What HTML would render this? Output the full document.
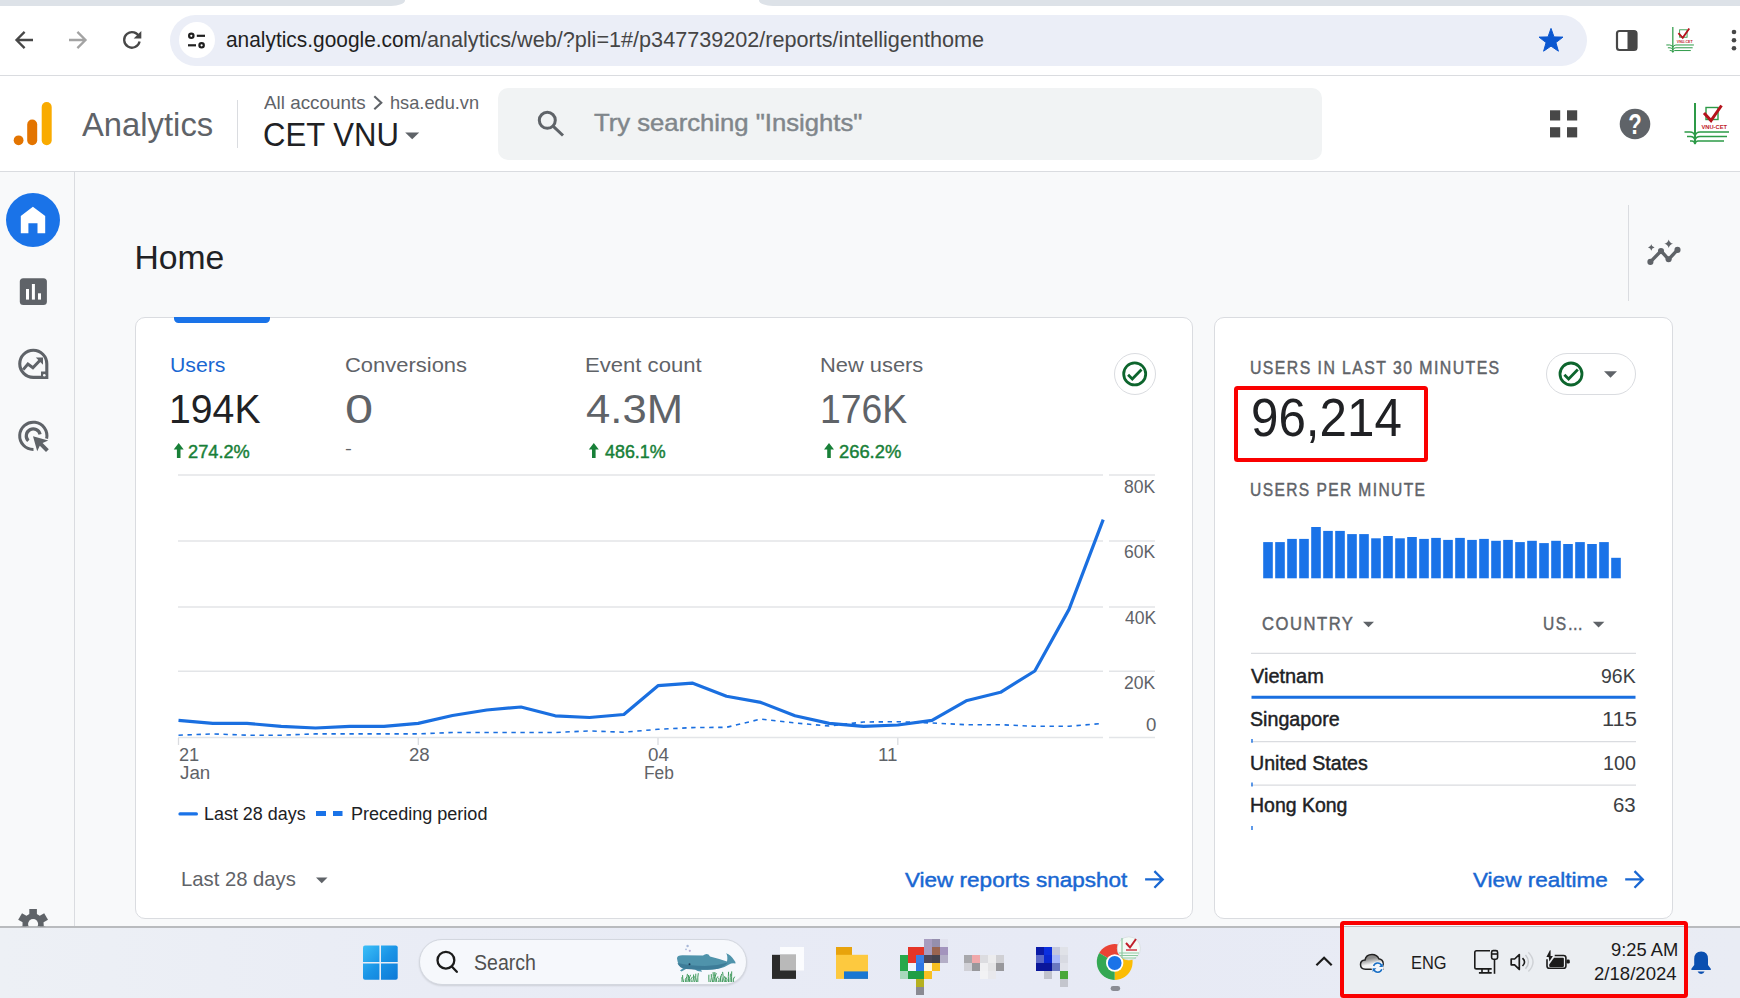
<!DOCTYPE html>
<html lang="en">
<head>
<meta charset="utf-8">
<title>Analytics | Home</title>
<style>
*{box-sizing:border-box;margin:0;padding:0}
html,body{width:1740px;height:998px;overflow:hidden;background:#f8f9fa;font-family:"Liberation Sans",sans-serif}
.abs{position:absolute}
.t{position:absolute;white-space:pre;line-height:1;transform-origin:0 50%}
#tabstrip{left:0;top:0;width:405px;height:5.8px;background:#dde2e8;border-bottom-right-radius:14px 5.8px}
#tabactive{left:759px;top:0;width:981px;height:5.8px;background:#dde2e8;border-bottom-left-radius:14px 5.8px}
#toolbar{left:0;top:0;width:1740px;height:75.5px;background:#fff;border-bottom:1px solid #dadce0}
#omni{left:170px;top:15px;width:1417px;height:51px;border-radius:26px;background:#ebeef7}
#omnicirc{left:178.5px;top:22px;width:36px;height:36px;border-radius:50%;background:#fff}
#gahead{left:0;top:76px;width:1740px;height:96px;background:#fff;border-bottom:1px solid #dadce0}
#gasearch{left:498px;top:88px;width:824px;height:72px;border-radius:10px;background:#f1f3f4}
#hdiv{left:237px;top:100px;width:1px;height:48px;background:#dadce0}
#nav{left:0;top:172px;width:75px;height:755px;background:#f8f9fa;border-right:1px solid #dadce0}
#homebtn{left:5.9px;top:192.9px;width:54px;height:54px;border-radius:50%;background:#1a73e8}
#vline{left:1628px;top:205px;width:1px;height:96px;background:#dadce0}
.card{background:#fff;border:1px solid #dadce0;border-radius:10px}
#card1{left:134.5px;top:316.5px;width:1058px;height:602px}
#card2{left:1214px;top:316.5px;width:459px;height:602px}
#tabind{left:174px;top:316.7px;width:96px;height:6px;background:#1a73e8;border-radius:0 0 4.5px 4.5px}
#chk1{left:1114px;top:353px;width:42px;height:42px;border-radius:50%;border:1px solid #dadce0;background:#fff}
#pill{left:1546px;top:353px;width:90px;height:42px;border-radius:21px;border:1px solid #dadce0;background:#fff}
#taskbar{left:0;top:926px;width:1740px;height:72px;background:linear-gradient(90deg,#edf0f5 0,#e9ecf5 25%,#e7eaf5 60%,#e9ecf4 100%);border-top:2px solid #b9bbbe}
#tsearch{left:419px;top:938.5px;width:328px;height:46.5px;border-radius:24px;background:#f6f8fc;border:1px solid #d3d7df;box-shadow:0 1px 2px rgba(0,0,0,.12)}
svg{position:absolute;left:0;top:0}
</style>
</head>
<body>
<div class="abs" id="toolbar"></div>
<div class="abs" id="tabstrip"></div>
<div class="abs" id="tabactive"></div>
<div class="abs" id="omni"></div>
<div class="abs" id="omnicirc"></div>
<div class="abs" id="gahead"></div>
<div class="abs" id="gasearch"></div>
<div class="abs" id="hdiv"></div>
<div class="abs" id="nav"></div>
<div class="abs" id="homebtn"></div>
<div class="abs" id="vline"></div>
<div class="abs card" id="card1"></div>
<div class="abs card" id="card2"></div>
<div class="abs" id="tabind"></div>
<div class="abs" id="chk1"></div>
<div class="abs" id="pill"></div>
<div class="abs" id="taskbar"></div>
<div class="abs" id="tsearch"></div>
<svg id="gfx" width="1740" height="998" viewBox="0 0 1740 998">
<g fill="none" stroke="#474747" stroke-width="2.3">
<path d="M33 40 H17.5 M24.6 31.9 L16.5 40 L24.6 48.1"/>
<path d="M69 40 H84.5 M77.4 31.9 L85.5 40 L77.4 48.1" stroke="#a3a3a3"/>
<path d="M139.3 37.2 A7.8 7.8 0 1 0 139.6 41.5"/>
</g>
<path d="M141.3 31 V38.6 H133.7 Z" fill="#474747"/>
<g fill="none" stroke="#1f1f1f" stroke-width="2.2"><circle cx="191.3" cy="35.8" r="2.2"/><path d="M196.8 35.8 H205"/><circle cx="201.6" cy="45.3" r="2.2"/><path d="M188 45.3 H196"/></g>
<polygon points="1551.0,28.4 1554.0,36.9 1563.0,37.1 1555.9,42.6 1558.4,51.2 1551.0,46.1 1543.6,51.2 1546.1,42.6 1539.0,37.1 1548.0,36.9" fill="#0b57d0" stroke="#0b57d0" stroke-width="1" stroke-linejoin="round"/>
<rect x="1617" y="31" width="19.5" height="19" rx="2.5" fill="none" stroke="#474747" stroke-width="2.2"/><rect x="1627.5" y="31" width="9" height="19" fill="#474747"/>
<g fill="#474747"><circle cx="1734" cy="32" r="2.3"/><circle cx="1734" cy="40.2" r="2.3"/><circle cx="1734" cy="48.3" r="2.3"/></g>
<g transform="translate(1684,103)"><g fill="none" stroke="#2d9a47" stroke-width="1.6">
<path d="M11 0 V40.5" stroke-width="2"/>
<path d="M0.5 29 H6 Q10 29 11 33 Q12 29 16 29 H45"/>
<path d="M3 33.5 H6.5 Q10 33.5 11 37 Q12 33.5 16 33.5 H43"/>
<path d="M6 38 H8 Q10.3 38 11 41 Q11.7 38 14 38 H40"/>
<rect x="22" y="4.5" width="12" height="12" stroke-width="1.4"/>
<path d="M20 10 L27 17.5 L37.5 2.5" stroke="#b5121b" stroke-width="3"/>
</g><text x="17.5" y="26" font-family="Liberation Sans, sans-serif" font-size="6" font-weight="700" fill="#c0202a" textLength="25.5" lengthAdjust="spacingAndGlyphs">VNU-CET</text></g>
<g transform="translate(1666,27) scale(0.62)"><g fill="none" stroke="#2d9a47" stroke-width="1.6">
<path d="M11 0 V40.5" stroke-width="2"/>
<path d="M0.5 29 H6 Q10 29 11 33 Q12 29 16 29 H45"/>
<path d="M3 33.5 H6.5 Q10 33.5 11 37 Q12 33.5 16 33.5 H43"/>
<path d="M6 38 H8 Q10.3 38 11 41 Q11.7 38 14 38 H40"/>
<rect x="22" y="4.5" width="12" height="12" stroke-width="1.4"/>
<path d="M20 10 L27 17.5 L37.5 2.5" stroke="#b5121b" stroke-width="3"/>
</g><text x="17.5" y="26" font-family="Liberation Sans, sans-serif" font-size="6" font-weight="700" fill="#c0202a" textLength="25.5" lengthAdjust="spacingAndGlyphs">VNU-CET</text></g>
<circle cx="18.6" cy="140.3" r="4.9" fill="#e37400"/><rect x="27.2" y="119.5" width="10" height="25.7" rx="5" fill="#e37400"/><rect x="41.7" y="102" width="10" height="43.2" rx="5" fill="#f9ab00"/>
<path d="M374.3 96.3 L381.3 102.8 L374.3 109.3" fill="none" stroke="#5f6368" stroke-width="2.1"/>
<path d="M405.2 132.4 H419.2 L412.2 139.2 Z" fill="#5f6368"/>
<g fill="none" stroke="#5f6368" stroke-width="3"><circle cx="547.3" cy="120.3" r="8"/><path d="M553.3 126.3 L563 135.5"/></g>
<g fill="#474747"><rect x="1550" y="110.3" width="10.2" height="10.2"/><rect x="1567" y="110.3" width="10.2" height="10.2"/><rect x="1550" y="127.2" width="10.2" height="10.2"/><rect x="1567" y="127.2" width="10.2" height="10.2"/></g>
<circle cx="1635" cy="124" r="15.3" fill="#5f6368"/><text x="1635" y="134.2" text-anchor="middle" font-family="Liberation Sans, sans-serif" font-size="29" font-weight="700" fill="#fff" textLength="13.5" lengthAdjust="spacingAndGlyphs">?</text>
<path d="M32.9 206.7 L45.2 216 V233.2 H37.5 V223.2 H28.4 V233.2 H20.8 V216 Z" fill="#fff"/>
<rect x="19.8" y="278.3" width="27.1" height="26.8" rx="3.5" fill="#5f6368"/><g fill="#fff"><rect x="26" y="289" width="3" height="10.6"/><rect x="31.9" y="284" width="3" height="15.6"/><rect x="38" y="293.3" width="3" height="6.3"/></g>
<g fill="none" stroke="#5f6368" stroke-width="3.1"><path d="M33.3 350.3 A13.5 13.5 0 1 0 33.3 377.4 H46.8 V363.8 A13.5 13.5 0 0 0 33.3 350.3 Z"/><path d="M23.2 369.6 L27.9 364 L32.9 367.8 L40.3 360" stroke-width="3"/></g><path d="M35.8 357.5 H43 V364.8 Z" fill="#5f6368"/><path d="M41 371.5 H47.5 V378 H41 Z" fill="#5f6368"/><circle cx="44.3" cy="375.2" r="1.3" fill="#f8f9fa"/>
<g fill="none" stroke="#5f6368" stroke-width="3"><path d="M33.5 449.4 A13.6 13.6 0 1 1 46.6 438.6"/><path d="M28.3 440.8 A7 7 0 1 1 40.1 434.3" stroke-width="3.2"/></g><path d="M33 436.3 L48.2 440.5 L42.6 443 L48.8 449.3 L46 452 L39.8 445.8 L37.2 451.3 Z" fill="#5f6368"/>
<defs><clipPath id="gc"><rect x="0" y="900" width="75" height="26.3"/></clipPath></defs><g clip-path="url(#gc)"><g transform="translate(33.1,924)" fill="#5f6368"><circle r="10.6"/><rect x="-3.8" y="-15" width="7.6" height="8" transform="rotate(0)"/><rect x="-3.8" y="-15" width="7.6" height="8" transform="rotate(60)"/><rect x="-3.8" y="-15" width="7.6" height="8" transform="rotate(120)"/><rect x="-3.8" y="-15" width="7.6" height="8" transform="rotate(180)"/><rect x="-3.8" y="-15" width="7.6" height="8" transform="rotate(240)"/><rect x="-3.8" y="-15" width="7.6" height="8" transform="rotate(300)"/><circle r="5.05" fill="#f8f9fa"/></g></g>
<g stroke="#5f6368" stroke-width="3.4" fill="none" stroke-linejoin="round"><path d="M1650.4 261.9 L1661 251 L1668.6 259.3 L1677.5 249.9"/></g><g fill="#5f6368"><circle cx="1650.4" cy="261.9" r="3.05"/><circle cx="1661" cy="251" r="3.05"/><circle cx="1668.6" cy="259.3" r="3.05"/><circle cx="1677.5" cy="249.9" r="3.05"/><path d="M1668.7 239.5 Q1669.5 243 1673 243.8 Q1669.5 244.6 1668.7 248 Q1667.9 244.6 1664.4 243.8 Q1667.9 243 1668.7 239.5Z"/><path d="M1651.3 244.2 Q1651.8 247 1654.6 247.5 Q1651.8 248 1651.3 250.8 Q1650.8 248 1648 247.5 Q1650.8 247 1651.3 244.2Z"/></g>
<path d="M178.7 443 L183.7 449.6 H180.5 V458 H176.9 V449.6 H173.7 Z" fill="#188038"/>
<path d="M593.8 443 L598.8 449.6 H595.6 V458 H592.0 V449.6 H588.8 Z" fill="#188038"/>
<path d="M829.0 443 L834.0 449.6 H830.8 V458 H827.2 V449.6 H824.0 Z" fill="#188038"/>
<g fill="none" stroke="#0d652d" stroke-width="2.8"><circle cx="1134.7" cy="373.9" r="11"/><path d="M1128.1 374.7 L1132.3 378.9 L1141.5 369.5"/></g>
<g fill="none" stroke="#0d652d" stroke-width="2.8"><circle cx="1571.0" cy="374.0" r="11"/><path d="M1564.4 374.8 L1568.6 379.0 L1577.8 369.6"/></g>
<path d="M1604 371.2 H1617 L1610.5 377.7 Z" fill="#5f6368"/>
<g stroke="#e3e5e8" stroke-width="1.6" fill="none"><path d="M178 475 H1103 M1109 475 H1155"/><path d="M178 541 H1103 M1109 541 H1155"/><path d="M178 607 H1103 M1109 607 H1155"/><path d="M178 671.3 H1103 M1109 671.3 H1155"/><path d="M178 737.5 H1103 M1109 737.5 H1155"/></g>
<g stroke="#dadce0" stroke-width="1.3" fill="none"><path d="M178.5 738 V745"/><path d="M418.3 738 V745"/><path d="M658.0 738 V745"/><path d="M897.8 738 V745"/></g>
<path d="M178.5 735.2 L212.8 733.9 L247.0 735.2 L281.2 735.2 L315.5 733.9 L349.8 733.9 L384.0 733.9 L418.2 733.9 L452.5 732.5 L486.8 732.5 L521.0 732.5 L555.2 732.5 L589.5 730.9 L623.8 732.2 L658.0 729.3 L692.2 727.6 L726.5 727.3 L760.8 719.1 L795.0 723.0 L829.2 726.0 L863.5 722.0 L897.8 721.7 L932.0 723.0 L966.2 724.7 L1000.5 724.7 L1034.8 726.3 L1069.0 726.3 L1103.2 723.4" fill="none" stroke="#1a6fe0" stroke-width="1.6" stroke-dasharray="4.4 4.6"/>
<path d="M178.5 720.4 L212.8 723.4 L247.0 723.4 L281.2 726.3 L315.5 728.0 L349.8 726.3 L384.0 726.3 L418.2 723.4 L452.5 715.5 L486.8 710.0 L521.0 707.0 L555.2 715.8 L589.5 717.5 L623.8 714.5 L658.0 685.7 L692.2 683.1 L726.5 696.2 L760.8 702.4 L795.0 715.8 L829.2 723.4 L863.5 726.3 L897.8 725.0 L932.0 720.4 L966.2 700.8 L1000.5 692.3 L1034.8 671.0 L1069.0 609.4 L1103.2 519.6" fill="none" stroke="#1a6fe0" stroke-width="3.2" stroke-linejoin="round"/>
<path d="M180 813.9 H196.4" stroke="#1a73e8" stroke-width="3.2" stroke-linecap="round"/>
<rect x="316" y="811" width="10" height="5" fill="#1a73e8"/><rect x="333" y="811" width="9.5" height="5" fill="#1a73e8"/>
<path d="M316 877.4 H327.5 L321.75 883.2 Z" fill="#5f6368"/>
<path d="M1145.1 879.4 H1163.0 M1154.4 871.1 L1162.7 879.4 L1154.4 887.7" fill="none" stroke="#1967d2" stroke-width="2.3"/>
<path d="M1625.2 879.4 H1643.1 M1634.5 871.1 L1642.8 879.4 L1634.5 887.7" fill="none" stroke="#1967d2" stroke-width="2.3"/>
<g fill="#1a73e8"><rect x="1263.2" y="542.1" width="9.6" height="36.2"/><rect x="1275.2" y="542.1" width="9.6" height="36.2"/><rect x="1287.2" y="538.9" width="9.6" height="39.4"/><rect x="1299.2" y="538.9" width="9.6" height="39.4"/><rect x="1311.2" y="527.0" width="9.6" height="51.3"/><rect x="1323.2" y="530.9" width="9.6" height="47.4"/><rect x="1335.2" y="530.9" width="9.6" height="47.4"/><rect x="1347.2" y="534.1" width="9.6" height="44.2"/><rect x="1359.2" y="534.1" width="9.6" height="44.2"/><rect x="1371.2" y="538.3" width="9.6" height="40.0"/><rect x="1383.2" y="536.0" width="9.6" height="42.3"/><rect x="1395.2" y="538.3" width="9.6" height="40.0"/><rect x="1407.2" y="537.0" width="9.6" height="41.3"/><rect x="1419.2" y="538.9" width="9.6" height="39.4"/><rect x="1431.2" y="537.9" width="9.6" height="40.4"/><rect x="1443.2" y="539.9" width="9.6" height="38.4"/><rect x="1455.2" y="537.9" width="9.6" height="40.4"/><rect x="1467.2" y="539.9" width="9.6" height="38.4"/><rect x="1479.2" y="538.9" width="9.6" height="39.4"/><rect x="1491.2" y="540.8" width="9.6" height="37.5"/><rect x="1503.2" y="539.9" width="9.6" height="38.4"/><rect x="1515.2" y="542.1" width="9.6" height="36.2"/><rect x="1527.2" y="540.8" width="9.6" height="37.5"/><rect x="1539.2" y="543.1" width="9.6" height="35.2"/><rect x="1551.2" y="540.8" width="9.6" height="37.5"/><rect x="1563.2" y="544.0" width="9.6" height="34.3"/><rect x="1575.2" y="542.1" width="9.6" height="36.2"/><rect x="1587.2" y="544.0" width="9.6" height="34.3"/><rect x="1599.2" y="542.1" width="9.6" height="36.2"/><rect x="1611.2" y="557.8" width="9.6" height="20.5"/></g>
<path d="M1363 621.7 H1374 L1368.5 627.2 Z" fill="#5f6368"/><path d="M1592.8 621.7 H1604.4 L1598.6 627.5 Z" fill="#5f6368"/>
<g stroke="#dadce0" stroke-width="1.2"><path d="M1251 653.4 H1636 M1251 741.6 H1636 M1251 785.2 H1636"/></g>
<path d="M1251.5 697.3 H1635.5" stroke="#1a6fe0" stroke-width="3"/>
<g stroke="#1a6fe0" stroke-width="1.4"><path d="M1252 739 V742.8 M1252 782.6 V786.4 M1252 826 V830"/></g>
<defs><linearGradient id="wg" gradientUnits="userSpaceOnUse" x1="363" y1="945" x2="398" y2="980"><stop offset="0" stop-color="#3cc0f8"/><stop offset="0.5" stop-color="#1a94e6"/><stop offset="1" stop-color="#0c78d6"/></linearGradient></defs>
<g fill="url(#wg)"><path d="M365 945.4 H379.4 V962 H363 V947.4 Q363 945.4 365 945.4Z"/><path d="M381 945.4 H395.7 Q397.7 945.4 397.7 947.4 V962 H381Z"/><path d="M363 963.6 H379.4 V979.8 H365 Q363 979.8 363 977.8Z"/><path d="M381 963.6 H397.7 V977.8 Q397.7 979.8 395.7 979.8 H381Z"/></g>
<g fill="none" stroke="#1b1b1b" stroke-width="2.3" stroke-linecap="round"><circle cx="445.9" cy="960.2" r="8.4"/><path d="M452 966.7 L456.8 971.8"/></g>
<g><path d="M677 958.5 Q677 955 683 955.2 L703 955.5 Q706 953 708.5 954.5 L710 956.5 Q720 959 727 961.5 Q728 955 726 953.3 Q731 955 734 960 Q736 962 735.5 963.5 Q732 962.5 729 964.5 Q722 969 712 969.5 Q706 970 701 969.8 L702 971.8 L697.5 971 L695 969.5 Q690 968.5 686 969 L681.5 971.6 L680 970.6 L683 968.2 Q678 967 677 958.5Z" fill="#4f93ab"/><path d="M677.5 963 Q690 966 705 966 Q718 965.5 728 962.5 Q722 969 712 969.5 Q700 970.3 686 969 Q679 968 677.5 963Z" fill="#3d7c98"/><circle cx="689.5" cy="964.3" r="1" fill="#1d3a55"/><circle cx="687.6" cy="946" r="1.2" fill="#a9b8d8"/><circle cx="686" cy="949.3" r="0.9" fill="#a9b8d8"/><circle cx="689.8" cy="950.8" r="1.1" fill="#b6a9d2"/></g>
<path d="M682.0 982 Q682.1 979.1 681.9 977.2 M683.6 982 Q682.3 977.8 682.6 975.1 M685.4 982 Q684.6 979.0 686.8 977.1 M686.8 982 Q686.8 977.1 687.4 973.9 M688.0 982 Q689.2 977.8 688.4 975.0 M689.7 982 Q688.4 977.7 690.6 974.8 M691.3 982 Q689.9 978.9 692.5 976.8 M692.8 982 Q693.9 977.5 693.6 974.5 M694.6 982 Q695.5 978.6 694.7 976.3 M696.5 982 Q695.3 977.0 695.8 973.7 M697.8 982 Q697.6 976.7 698.3 973.2 M709.0 982 Q708.7 977.6 708.9 974.7 M710.6 982 Q711.8 977.3 711.3 974.1 M712.4 982 Q713.9 976.0 713.1 972.1 M713.6 982 Q715.0 976.0 714.9 972.0 M715.2 982 Q714.3 976.7 716.3 973.1 M716.8 982 Q715.4 978.6 717.9 976.4 M718.6 982 Q719.5 979.5 718.7 977.8 M719.9 982 Q720.7 978.6 721.1 976.3 M721.0 982 Q719.6 977.1 721.8 973.9 M722.4 982 Q723.8 975.9 722.6 971.9 M724.3 982 Q723.0 978.5 724.8 976.2 M725.4 982 Q725.1 979.0 725.9 977.0 M726.6 982 Q727.7 979.7 726.4 978.2 M728.5 982 Q728.1 975.9 728.6 971.8 M730.0 982 Q730.3 977.0 730.4 973.7 M731.6 982 Q731.6 975.7 731.7 971.4 M733.3 982 Q732.7 978.8 734.7 976.7 " fill="none" stroke="#3f9a5c" stroke-width="1"/>
<rect x="780" y="947" width="24" height="23.5" fill="#fbfcfe"/><rect x="772" y="954.8" width="24" height="24.1" fill="#2b2b2b"/><rect x="780" y="954.8" width="16" height="15.7" fill="#b9b9b9"/>
<rect x="836" y="947" width="16" height="8" fill="#e8a30c"/><rect x="836" y="954.8" width="32" height="24.1" fill="#fdc93f"/><rect x="844" y="971.4" width="24" height="7.5" fill="#1877d2"/>
<rect x="924" y="939" width="8" height="8" fill="#a79cc0"/><rect x="932" y="939" width="8" height="8" fill="#958fae"/><rect x="940" y="939" width="8" height="8" fill="#e1e2ee"/><rect x="908" y="947" width="8" height="8" fill="#e53528"/><rect x="916" y="947" width="8" height="8" fill="#e53528"/><rect x="924" y="947" width="8" height="8" fill="#a79cc0"/><rect x="932" y="947" width="8" height="8" fill="#9a6450"/><rect x="940" y="947" width="8" height="8" fill="#a394bd"/><rect x="900" y="955" width="8" height="8" fill="#27a84a"/><rect x="908" y="955" width="8" height="8" fill="#e53528"/><rect x="916" y="955" width="8" height="8" fill="#3b7fe6"/><rect x="924" y="955" width="8" height="8" fill="#4d4859"/><rect x="932" y="955" width="8" height="8" fill="#45434f"/><rect x="940" y="955" width="8" height="8" fill="#b3aec6"/><rect x="900" y="963" width="8" height="8" fill="#27a84a"/><rect x="908" y="963" width="8" height="8" fill="#f0f4fb"/><rect x="916" y="963" width="8" height="8" fill="#2f78e4"/><rect x="924" y="963" width="8" height="8" fill="#fff8e0"/><rect x="932" y="963" width="8" height="8" fill="#f8c022"/><rect x="900" y="971" width="8" height="8" fill="#a8d8bd"/><rect x="908" y="971" width="8" height="8" fill="#1f9e44"/><rect x="916" y="971" width="8" height="8" fill="#1f9e44"/><rect x="924" y="971" width="8" height="8" fill="#f8c022"/><rect x="916" y="979" width="8" height="8" fill="#b5b020"/><rect x="916" y="987" width="8" height="8" fill="#8a8a92"/>
<rect x="964" y="955" width="8" height="8" fill="#a8a8ac"/><rect x="972" y="955" width="8" height="8" fill="#f0a8aa"/><rect x="980" y="955" width="8" height="8" fill="#dcdce0"/><rect x="988" y="955" width="8" height="8" fill="#ececee"/><rect x="996" y="955" width="8" height="8" fill="#d0d0d4"/><rect x="964" y="963" width="8" height="8" fill="#d0d0d6"/><rect x="972" y="963" width="8" height="8" fill="#98989c"/><rect x="980" y="963" width="8" height="8" fill="#f0f0f2"/><rect x="988" y="963" width="8" height="8" fill="#e4e4e6"/><rect x="996" y="963" width="8" height="8" fill="#98989c"/><rect x="980" y="971" width="8" height="8" fill="#f2f2f4"/><rect x="988" y="971" width="8" height="8" fill="#e8e8ec"/>
<rect x="1036" y="947" width="8" height="8" fill="#0a1aa8"/><rect x="1044" y="947" width="8" height="8" fill="#0b2fe0"/><rect x="1052" y="947" width="8" height="8" fill="#c4c8dc"/><rect x="1060" y="947" width="8" height="8" fill="#e0e2e8"/><rect x="1036" y="955" width="8" height="8" fill="#5a68c8"/><rect x="1044" y="955" width="8" height="8" fill="#0a28d0"/><rect x="1052" y="955" width="8" height="8" fill="#a8b8f8"/><rect x="1060" y="955" width="8" height="8" fill="#d8dae2"/><rect x="1036" y="963" width="8" height="8" fill="#0a169a"/><rect x="1044" y="963" width="8" height="8" fill="#0a169a"/><rect x="1052" y="963" width="8" height="8" fill="#6a78c0"/><rect x="1060" y="963" width="8" height="8" fill="#e0e2ea"/><rect x="1044" y="971" width="8" height="8" fill="#c0c2cc"/><rect x="1060" y="971" width="8" height="8" fill="#4aa83a"/><rect x="1060" y="979" width="8" height="8" fill="#c4c6ce"/>
<g><path d="M1099.20 953.05 A17.9 17.9 0 0 1 1130.20 953.05 L1114.7 962 Z" fill="#ea4335"/><path d="M1130.20 953.05 A17.9 17.9 0 0 1 1114.70 979.90 L1114.7 962 Z" fill="#fbbc04"/><path d="M1114.70 979.90 A17.9 17.9 0 0 1 1099.20 953.05 L1114.7 962 Z" fill="#34a853"/>
<circle cx="1114.7" cy="963" r="8.7" fill="#fff"/><circle cx="1114.7" cy="963" r="6.9" fill="#1a73e8"/></g>
<circle cx="1128.9" cy="948.4" r="11.6" fill="#f4faf6" stroke="#d5dbe0" stroke-width="0.8"/><g stroke="#8cc9a0" stroke-width="1.2" fill="none"><path d="M1122 938 V958 M1119 953 H1139 M1120 955.5 H1138 M1122 958 H1136"/></g><path d="M1126 943 L1130 947.5 L1136 939" stroke="#c0202a" stroke-width="2" fill="none"/><rect x="1126" y="949" width="11" height="2" fill="#d86a72"/>
<rect x="1110.6" y="986" width="9.6" height="4.9" rx="2.4" fill="#8a8c94"/>
<rect x="1344" y="927" width="340" height="71" fill="#ebeef2"/>
<path d="M1316.4 965.3 L1324.1 957.8 L1331.7 965.3" fill="none" stroke="#1b1b1b" stroke-width="2.2"/>
<defs><linearGradient id="cg" x1="0" y1="0" x2="0.3" y2="1"><stop offset="0.35" stop-color="#8a8a8a"/><stop offset="0.75" stop-color="#f4f4f4"/></linearGradient></defs>
<path d="M1365.5 969.2 Q1360.5 969.2 1360.5 964.5 Q1360.5 960.3 1365 960 Q1366 954.6 1372 954.6 Q1377 954.6 1378.8 958.8 Q1383 959.5 1383.2 963.5 L1383 969.2 Z" fill="url(#cg)" stroke="#222" stroke-width="1.5"/>
<circle cx="1377.7" cy="967.6" r="6.2" fill="#f4f6fa"/><g fill="none" stroke="#1a6fc4" stroke-width="1.5"><path d="M1373.6 966 A4.3 4.3 0 0 1 1381.6 965.6"/><path d="M1381.8 969.2 A4.3 4.3 0 0 1 1373.8 969.6"/></g><path d="M1382.8 963.2 V967 H1379 Z M1372.6 972 V968.2 H1376.4 Z" fill="#1a6fc4"/>
<g fill="none" stroke="#1b1b1b" stroke-width="1.6"><path d="M1490 950.8 H1476.5 Q1474.8 950.8 1474.8 952.5 V967.2 Q1474.8 968.9 1476.5 968.9 H1491.7"/><path d="M1482 969 V972.9 M1488.5 969 V972.9 M1478.9 972.9 H1491.7"/><path d="M1494.5 959.2 V973.8"/><rect x="1491.6" y="950.6" width="6" height="8.6" rx="1.6"/><path d="M1491.6 954 H1497.6"/></g>
<g fill="none" stroke="#1b1b1b" stroke-width="1.7" stroke-linejoin="round"><path d="M1511.2 959 H1514.6 L1519.3 954.6 V969.4 L1514.6 964.8 H1511.2 Z"/><path d="M1522.5 958.2 Q1526.6 962 1522.5 966" stroke-width="1.6"/><path d="M1525.5 954.9 Q1531.4 962 1525.5 968.7" stroke="#c3c6ca" stroke-width="1.4"/><path d="M1528.3 952.2 Q1537.8 962 1528.3 971.5" stroke="#cfd2d6" stroke-width="1.4"/></g>
<path d="M1554.7 955.5 H1563.6 Q1565.9 955.5 1565.9 957.8 V965.9 Q1565.9 968.2 1563.6 968.2 H1549.3 Q1547 968.2 1547 965.9 V959.2" fill="none" stroke="#1b1b1b" stroke-width="1.6"/><rect x="1566.4" y="959.6" width="3.4" height="4" rx="1.4" fill="#1b1b1b"/><path d="M1554 957.7 H1562.9 Q1563.9 957.7 1563.9 958.7 V965.9 Q1563.9 966.9 1562.9 966.9 H1550.2 Q1549.2 966.9 1549.2 965.9 V964.5 Z" fill="#1b1b1b"/><path d="M1549.9 950.3 L1546.4 957 H1548.7 L1549.4 961.6 L1552.9 955.9 H1550.6 V950.3 Z" fill="#1b1b1b"/>
<path d="M1701.2 951.4 Q1708 951.4 1708 959 V965 L1710.8 968.8 V970 H1691.4 V968.8 L1694.2 965 V959 Q1694.2 951.4 1701.2 951.4 Z M1697.6 971.6 H1704.6 Q1703.6 973.9 1701.1 973.9 Q1698.6 973.9 1697.6 971.6Z" fill="#0a4fb0"/>
<g fill="none" stroke="#fa0000" stroke-width="4"><rect x="1236" y="388" width="190" height="72" rx="1.5"/><rect x="1342" y="923" width="344" height="73" rx="1.5"/></g>
</svg>
<span class="t" style="left:225.99px;top:30.00px;font-size:21.5px;color:#1f1f1f;transform:scaleX(0.9714);">analytics.google.com</span>
<span class="t" style="left:421.00px;top:30.00px;font-size:21.5px;color:#454545;transform:scaleX(1.0054);">/analytics/web/?pli=1#/p347739202/reports/intelligenthome</span>
<span class="t" style="left:81.60px;top:108.00px;font-size:33.8px;color:#5f6368;transform:scaleX(0.9701);">Analytics</span>
<span class="t" style="left:264.00px;top:94.00px;font-size:18.5px;color:#5f6368;transform:scaleX(1.0186);">All accounts</span>
<span class="t" style="left:389.58px;top:94.00px;font-size:18.5px;color:#5f6368;transform:scaleX(0.9838);">hsa.edu.vn</span>
<span class="t" style="left:262.76px;top:118.00px;font-size:33.4px;color:#202124;transform:scaleX(0.9311);">CET VNU</span>
<span class="t" style="left:594.20px;top:111.00px;font-size:24px;color:#80868b;-webkit-text-stroke:0.45px #80868b;transform:scaleX(1.0697);">Try searching &quot;Insights&quot;</span>
<span class="t" style="left:134.48px;top:241.00px;font-size:33.7px;color:#202124;">Home</span>
<span class="t" style="left:169.73px;top:355.00px;font-size:20.3px;color:#1967d2;transform:scaleX(1.0473);">Users</span>
<span class="t" style="left:169.24px;top:388.00px;font-size:41.5px;color:#202124;transform:scaleX(0.9447);">194K</span>
<span class="t" style="left:188.38px;top:443.00px;font-size:18.4px;color:#188038;-webkit-text-stroke:0.45px #188038;transform:scaleX(0.9913);">274.2%</span>
<span class="t" style="left:344.98px;top:355.00px;font-size:20.3px;color:#5f6368;transform:scaleX(1.0825);">Conversions</span>
<span class="t" style="left:344.69px;top:388.00px;font-size:41.5px;color:#5f6368;transform:scaleX(1.2181);">0</span>
<span class="t" style="left:344.78px;top:440.00px;font-size:16.5px;color:#5f6368;transform:scaleX(1.2417);">-</span>
<span class="t" style="left:585.16px;top:355.00px;font-size:20.3px;color:#5f6368;transform:scaleX(1.0889);">Event count</span>
<span class="t" style="left:586.34px;top:388.00px;font-size:41.5px;color:#5f6368;transform:scaleX(1.0510);">4.3M</span>
<span class="t" style="left:604.60px;top:443.00px;font-size:18.4px;color:#188038;-webkit-text-stroke:0.45px #188038;transform:scaleX(0.9717);">486.1%</span>
<span class="t" style="left:820.34px;top:355.00px;font-size:20.3px;color:#5f6368;transform:scaleX(1.0778);">New users</span>
<span class="t" style="left:820.26px;top:388.00px;font-size:41.5px;color:#5f6368;transform:scaleX(0.8993);">176K</span>
<span class="t" style="left:838.98px;top:443.00px;font-size:18.4px;color:#188038;-webkit-text-stroke:0.45px #188038;transform:scaleX(0.9976);">266.2%</span>
<span class="t" style="left:1123.97px;top:478.00px;font-size:18px;color:#5f6368;transform:scaleX(0.9757);">80K</span>
<span class="t" style="left:1123.97px;top:543.00px;font-size:18px;color:#5f6368;transform:scaleX(0.9757);">60K</span>
<span class="t" style="left:1125.00px;top:609.00px;font-size:18px;color:#5f6368;transform:scaleX(0.9746);">40K</span>
<span class="t" style="left:1123.97px;top:674.00px;font-size:18px;color:#5f6368;transform:scaleX(0.9757);">20K</span>
<span class="t" style="left:1145.93px;top:716.00px;font-size:18px;color:#5f6368;transform:scaleX(1.0341);">0</span>
<span class="t" style="left:179.05px;top:746.00px;font-size:18px;color:#5f6368;transform:scaleX(1.0109);">21</span>
<span class="t" style="left:180.21px;top:764.00px;font-size:18px;color:#5f6368;transform:scaleX(1.0423);">Jan</span>
<span class="t" style="left:408.55px;top:746.00px;font-size:18px;color:#5f6368;transform:scaleX(1.0338);">28</span>
<span class="t" style="left:647.76px;top:746.00px;font-size:18px;color:#5f6368;transform:scaleX(1.0443);">04</span>
<span class="t" style="left:643.94px;top:764.00px;font-size:18px;color:#5f6368;transform:scaleX(0.9628);">Feb</span>
<span class="t" style="left:878.33px;top:746.00px;font-size:18px;color:#5f6368;transform:scaleX(1.0427);">11</span>
<span class="t" style="left:203.78px;top:805.00px;font-size:18.9px;color:#202124;transform:scaleX(0.9487);">Last 28 days</span>
<span class="t" style="left:350.98px;top:805.00px;font-size:18.9px;color:#202124;transform:scaleX(0.9552);">Preceding period</span>
<span class="t" style="left:181.35px;top:868.00px;font-size:21px;color:#5f6368;transform:scaleX(0.9646);">Last 28 days</span>
<span class="t" style="left:905.20px;top:870.00px;font-size:20.5px;color:#1967d2;-webkit-text-stroke:0.45px #1967d2;transform:scaleX(1.0975);">View reports snapshot</span>
<span class="t" style="left:1250.19px;top:360.00px;font-size:17.7px;color:#5f6368;letter-spacing:1.6px;-webkit-text-stroke:0.45px #5f6368;transform:scaleX(0.8955);">USERS IN LAST 30 MINUTES</span>
<span class="t" style="left:1250.55px;top:390.00px;font-size:54px;color:#202124;transform:scaleX(0.9135);">96,214</span>
<span class="t" style="left:1250.19px;top:482.00px;font-size:17.7px;color:#5f6368;letter-spacing:1.6px;-webkit-text-stroke:0.45px #5f6368;transform:scaleX(0.8797);">USERS PER MINUTE</span>
<span class="t" style="left:1261.97px;top:616.00px;font-size:17.7px;color:#5f6368;letter-spacing:1.6px;-webkit-text-stroke:0.45px #5f6368;transform:scaleX(0.9404);">COUNTRY</span>
<span class="t" style="left:1543.31px;top:616.00px;font-size:17.7px;color:#5f6368;letter-spacing:1.6px;-webkit-text-stroke:0.45px #5f6368;transform:scaleX(0.8790);">US…</span>
<span class="t" style="left:1251.40px;top:667.00px;font-size:19.9px;color:#202124;-webkit-text-stroke:0.45px #202124;transform:scaleX(1.0029);">Vietnam</span>
<span class="t" style="left:1600.96px;top:667.00px;font-size:19.9px;color:#3c4043;transform:scaleX(0.9790);">96K</span>
<span class="t" style="left:1250.38px;top:710.00px;font-size:19.9px;color:#202124;-webkit-text-stroke:0.45px #202124;transform:scaleX(0.9883);">Singapore</span>
<span class="t" style="left:1601.64px;top:710.00px;font-size:19.9px;color:#3c4043;transform:scaleX(1.1043);">115</span>
<span class="t" style="left:1250.39px;top:754.00px;font-size:19.9px;color:#202124;-webkit-text-stroke:0.45px #202124;transform:scaleX(0.9866);">United States</span>
<span class="t" style="left:1602.74px;top:754.00px;font-size:19.9px;color:#3c4043;transform:scaleX(0.9905);">100</span>
<span class="t" style="left:1250.39px;top:796.00px;font-size:19.9px;color:#202124;-webkit-text-stroke:0.45px #202124;transform:scaleX(0.9790);">Hong Kong</span>
<span class="t" style="left:1612.94px;top:796.00px;font-size:19.9px;color:#3c4043;transform:scaleX(1.0259);">63</span>
<span class="t" style="left:1473.40px;top:870.00px;font-size:20.5px;color:#1967d2;-webkit-text-stroke:0.45px #1967d2;transform:scaleX(1.0989);">View realtime</span>
<span class="t" style="left:473.56px;top:952.00px;font-size:21.6px;color:#505050;transform:scaleX(0.9042);">Search</span>
<span class="t" style="left:1411.30px;top:955.00px;font-size:17.7px;color:#1b1b1b;transform:scaleX(0.9273);">ENG</span>
<span class="t" style="left:1610.76px;top:942.00px;font-size:17.7px;color:#1b1b1b;transform:scaleX(1.0365);">9:25 AM</span>
<span class="t" style="left:1594.38px;top:966.00px;font-size:17.7px;color:#1b1b1b;transform:scaleX(1.0500);">2/18/2024</span>
</body>
</html>
